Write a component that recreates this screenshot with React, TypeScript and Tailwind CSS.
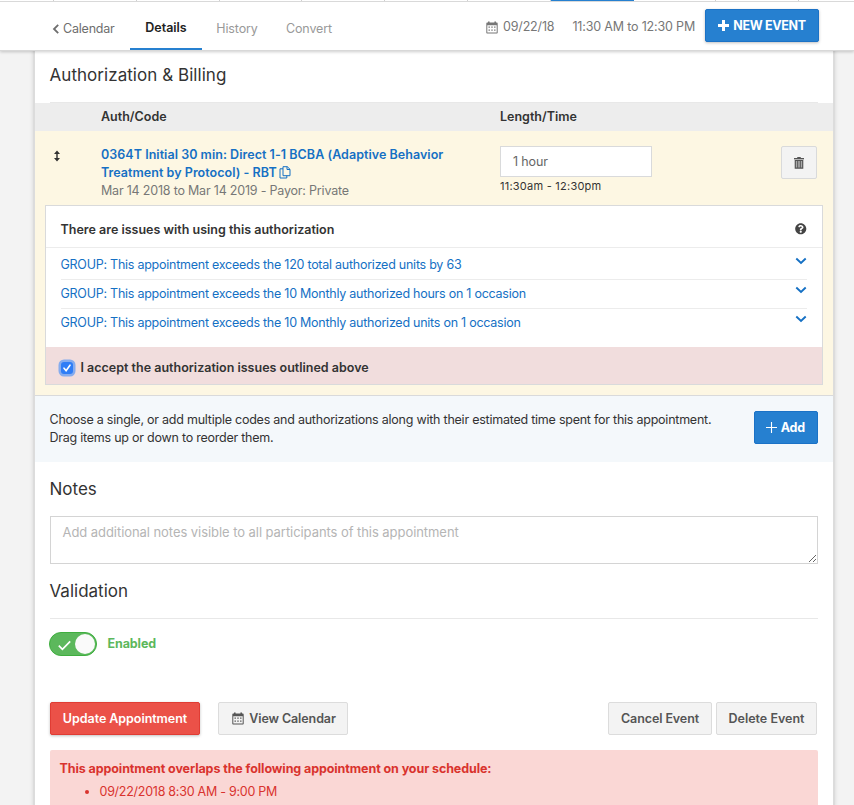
import { useState } from 'react';
import { FaQuestionCircle } from 'react-icons/fa';

const TABS = ['Details', 'History', 'Convert'];

const WEEK_STRIP = [0, 1, 2, 3, 4, 5, 6, 7, 8, 9];

const ISSUES = [
  'GROUP: This appointment exceeds the 120 total authorized units by 63',
  'GROUP: This appointment exceeds the 10 Monthly authorized hours on 1 occasion',
  'GROUP: This appointment exceeds the 10 Monthly authorized units on 1 occasion',
];

function CalendarIcon({ className }: { className?: string }) {
  return (
    <svg viewBox="0 0 12 13" className={className} fill="currentColor">
      <path fillRule="evenodd" d="M2 .5h1.6v1h4.8v-1H10v1h.6c.7 0 1.1.5 1.1 1.1v8.8c0 .7-.4 1.1-1.1 1.1H1.4c-.7 0-1.1-.4-1.1-1.1V2.600c0-.6.4-1.100 1.100-1.100H2zM1.300 4.300v7.200h9.400V4.300z" />
      <path d="M2.500 5.600h1.400v1.200H2.500zM5.300 5.600h1.400v1.200H5.300zM8.100 5.600h1.400v1.200H8.100zM2.500 8.600h1.400v1.200H2.500zM5.300 8.600h1.400v1.200H5.300zM8.100 8.600h1.400v1.200H8.100z" />
    </svg>
  );
}

function CopyIcon() {
  return (
    <svg viewBox="0 0 12 13" className="inline-block w-3 h-[13px] ml-0.5 -mt-[3px]" fill="none" stroke="currentColor" strokeWidth="1">
      <path d="M4 .7h4.300l2.700 2.600v6.400H4z" />
      <path d="M8 .7v2.800h3" />
      <path d="M4 2.800H1v9.200h6.800V9.700" />
    </svg>
  );
}

function TrashIcon() {
  return (
    <svg viewBox="0 0 10 12" className="w-2.5 h-3" fill="none" stroke="#555">
      <path d="M1.300 3.500h7.400v7.700H1.300z" fill="#aaa" strokeWidth="1.200" />
      <path d="M0 1.700h10" strokeWidth="1.400" />
      <path d="M3.500 1V.5h3V1" />
      <path d="M3.700 3.500v7.500M6.300 3.500v7.500" strokeWidth="1" />
    </svg>
  );
}

function Chevron() {
  return (
    <svg viewBox="0 0 12 8" className="w-3 h-2" fill="none" stroke="#1570c4" strokeWidth="1.900">
      <path d="M1.300 1.500 6 6l4.700-4.500" />
    </svg>
  );
}

function TopBar() {
  const [tab, setTab] = useState('Details');

  return (
    <header className="relative z-10 h-[51px] bg-white border-b border-[#d8d8d8] shadow-[0_1px_3px_rgba(0,0,0,0.2)]">
      {/* Bottom edge of the day strip */}
      <div className="flex h-0.5 border-b border-[#d9d9d9] overflow-hidden">
        <div className="w-[54px] shrink-0 h-px border-r border-[#d0d0d0]" />
        {WEEK_STRIP.map(day => (
          <div
            key={day}
            className={`shrink-0 w-[82.8px] ${day === 6 ? 'h-0.5 bg-[#2680d0]' : 'h-px border-r border-[#d0d0d0]'}`}
          />
        ))}
      </div>

      <div className="flex items-start h-12 pl-[52px] pr-[35px]">
        <button className="flex items-center h-[53px] w-[78px] text-[#6e6e6e] text-[12.5px] tracking-[-0.2px]">
          <svg viewBox="0 0 8 10" className="w-2 h-2.5 mr-[3px]" fill="none" stroke="currentColor" strokeWidth="1.800">
            <path d="M6.200.8 2 5l4.200 4.200" />
          </svg>
          Calendar
        </button>
        {TABS.map(name => (
          <button
            key={name}
            onClick={() => setTab(name)}
            className={`w-[72px] text-[12.5px] ${
              name === tab
                ? 'h-12 pt-[5px] font-semibold text-[#222] border-b-2 border-[#2680d0]'
                : 'h-[53px] pr-0.5 text-[#999] tracking-[-0.12px]'
            }`}
          >
            {name}
          </button>
        ))}
        <div className="flex ml-auto h-[50px] items-center text-[12.5px] text-[#777] tracking-[-0.17px]">
          <CalendarIcon className="w-3 h-[13px] mr-[5px]" />
          <span>09/22/18</span>
          <span className="ml-[18px]">11:30 AM to 12:30 PM</span>
        </div>
        <button className="flex items-center justify-center w-[114px] h-[33px] mt-[7px] ml-[10px] rounded-[2px] bg-[#2680d0] border border-[#1b72c6] text-white text-[12.5px] font-bold tracking-[-0.33px] shadow-[0_1px_3px_rgba(0,0,0,0.25)]">
          <svg viewBox="0 0 11 11" className="w-[11px] h-[11px] mr-1" stroke="currentColor" strokeWidth="3">
            <path d="M5.500 0v11M0 5.500h11" />
          </svg>
          NEW EVENT
        </button>
      </div>
    </header>
  );
}

function IssuesPanel() {
  const [accepted, setAccepted] = useState(true);

  return (
    <div className="mx-[10px] h-[180px] border border-[#d9dadb] bg-white">
      <div className="flex items-center justify-between h-[42px] pl-[14.500px] pr-[15.500px] pt-[5px] border-b border-[#ececec]">
        <h3 className="pt-px font-semibold text-[#333]">There are issues with using this authorization</h3>
        <FaQuestionCircle className="w-[11.500px] h-[11.500px] text-[#444]" />
      </div>
      <ul className="px-[15px] h-[99px]">
        {ISSUES.map((issue, i) => (
          <li
            key={issue}
            className={`flex justify-between text-[#1570c4] tracking-[-0.25px] ${i === 0 ? 'h-8 pt-2' : 'h-[29px] pt-[5px]'} ${
              i < 2 ? 'border-b border-[#ececec]' : ''
            }`}
          >
            <span className="-ml-[0.500px]">{issue}</span>
            <span className="pt-px"><Chevron /></span>
          </li>
        ))}
      </ul>
      <label className="flex items-center h-[37px] pl-[15px] pt-1 bg-[#f1dddd] font-semibold text-[#333]">
        <input type="checkbox" className="sr-only" checked={accepted} onChange={() => setAccepted(!accepted)} />
        <span className="flex items-center justify-center w-3 h-3 rounded-[3px] bg-[#2f7df6] ring-[2.5px] ring-[#86acee] mr-[7.500px]">
          {accepted && (
            <svg viewBox="0 0 10 10" className="w-2.5 h-2.5" fill="none" stroke="#fff" strokeWidth="1.600" strokeLinecap="round">
              <path d="M2 5.200 4.100 7.600 8 2.200" />
            </svg>
          )}
        </span>
        I accept the authorization issues outlined above
      </label>
    </div>
  );
}

export default function App() {
  const [enabled, setEnabled] = useState(true);

  return (
    <div className="h-[805px] overflow-hidden bg-[#f3f3f3] font-['Inter','Liberation_Sans',sans-serif] text-[12.5px] leading-[18px] text-[#333]">
      <TopBar />

      <main className="mx-[35px] w-[798px] h-[754px] bg-white shadow-[0_0_0_2px_#dcdcdc,0_0_4px_2px_rgba(0,0,0,0.12)]">
        {/* Authorization */}
        <section>
          <h2 className="h-[52px] mx-[15px] pt-[14px] border-b border-[#e8e8e8] text-[17px] leading-5 tracking-[0.05px] -indent-[0.500px]">Authorization &amp; Billing</h2>
          <div className="flex items-center h-7 bg-[#ededed] font-semibold">
            <span className="w-[465px] pl-[66px]">Auth/Code</span>
            <span>Length/Time</span>
          </div>

          <div className="h-[265px] bg-[#fdf7e3] border-b border-[#d9dadb]">
            <div className="flex h-[74px] pt-[15px] pr-4">
              <div className="w-[66px] pl-[18px] pt-1">
                <svg viewBox="0 0 8 12" className="w-2 h-3" fill="none" stroke="#444" strokeWidth="1.600">
                  <path d="M4 2v8" />
                  <path d="M1 4 4 .5 7 4zM1 8l3 3.500L7 8z" fill="#333" stroke="none" />
                </svg>
              </div>
              <div className="w-[399px]">
                <a href="#" className="block w-[370px] font-semibold text-[#1570c4] tracking-[0.04px]">
                  0364T Initial 30 min: Direct 1-1 BCBA (Adaptive Behavior
                  <br />
                  Treatment by Protocol) - RBT
                  <CopyIcon />
                </a>
                <p className="text-[#777] tracking-[-0.2px]">Mar 14 2018 to Mar 14 2019 - Payor: Private</p>
              </div>
              <div>
                <input
                  defaultValue="1 hour"
                  className="block w-[152px] h-[31px] px-3 border border-[#d9dadb] bg-white text-[#666] tracking-[-0.15px] outline-none"
                />
                <p className="text-[11px] tracking-[0.24px] text-[#333]">11:30am - 12:30pm</p>
              </div>
              <button className="flex items-center justify-center ml-auto w-9 h-[33px] rounded-[2px] border border-[#d9dadb] bg-[#f3f3f3]">
                <TrashIcon />
              </button>
            </div>
            <IssuesPanel />
          </div>

          <div className="flex justify-between h-[66px] pl-[14.500px] pr-[15px] pt-[15px] bg-[#f4f8fb]">
            <p className="tracking-[-0.235px]">
              Choose a single, or add multiple codes and authorizations along with their estimated time spent for this appointment.
              <br />
              Drag items up or down to reorder them.
            </p>
            <button className="flex shrink-0 items-center justify-center w-16 h-[33px] pr-px rounded-[2px] bg-[#2680d0] border border-[#1b72c6] text-white font-bold tracking-[-0.2px]">
              <svg viewBox="0 0 11 11" className="w-[11px] h-[11px] mr-[3.500px]" stroke="currentColor" strokeWidth="1.100">
                <path d="M5.500 0v11M0 5.500h11" />
              </svg>
              Add
            </button>
          </div>
        </section>

        {/* Notes */}
        <section className="px-[15px]">
          <h2 className="h-[54px] pt-[17px] text-[17px] leading-5 -indent-[0.500px]">Notes</h2>
          <textarea
            placeholder="Add additional notes visible to all participants of this appointment"
            className="block w-full h-12 px-[11.500px] pt-1.5 border border-[#d4d4d4] bg-white text-[13px] tracking-[-0.06px] placeholder:text-[#b5b5b5] resize outline-none"
          />
        </section>

        {/* Validation */}
        <section className="px-[15px]">
          <h2 className="h-[55px] pt-[17px] border-b border-[#e8e8e8] text-[17px] leading-5 -indent-[0.500px]">Validation</h2>
          <div className="flex items-center h-[50px] -ml-px">
            <button
              onClick={() => setEnabled(!enabled)}
              className={`flex items-center justify-between w-12 h-6 pl-2 pr-px rounded-full border ${
                enabled ? 'bg-[#5cb85c] border-[#3fae3f]' : 'bg-[#bbb] border-[#aaa] flex-row-reverse'
              }`}
            >
              <svg viewBox="0 0 13 11" className="w-[13px] h-[11px] mt-0.5" fill="none" stroke="#fff" strokeWidth="1.700">
                <path d="M.8 5.700 4.400 9.300 12.200 1.300" />
              </svg>
              <span className="w-5 h-5 rounded-full bg-[#fafafa]" />
            </button>
            <span className="ml-[10.500px] font-bold text-[#5cb85c] tracking-[-0.1px]">Enabled</span>
          </div>
        </section>

        {/* Actions */}
        <section className="px-[15px] pt-[33px]">
          <div className="flex h-12 pr-px">
            <button className="w-[150px] h-[33px] rounded-[2px] border border-[#e03c34] bg-[#eb5148] text-white font-semibold tracking-[-0.05px] shadow-[0_1px_3px_rgba(0,0,0,0.25)]">
              Update Appointment
            </button>
            <button className="flex items-center justify-center ml-[18px] w-[130px] h-[33px] rounded-[2px] border border-[#dcdcdc] bg-[#f3f3f3] text-[#555] font-semibold tracking-[-0.1px]">
              <CalendarIcon className="w-3 h-[13px] mr-[5px] ml-0.5" />
              View Calendar
            </button>
            <button className="ml-auto w-[104px] h-[33px] rounded-[2px] border border-[#dcdcdc] bg-[#f3f3f3] text-[#555] font-semibold tracking-[-0.1px]">
              Cancel Event
            </button>
            <button className="ml-1 w-[101px] h-[33px] rounded-[2px] border border-[#dcdcdc] bg-[#f3f3f3] text-[#555] font-semibold">
              Delete Event
            </button>
          </div>

          <div className="h-20 px-[9.500px] pt-[10px] rounded-[2px] bg-[#fad7d5] text-[#d9332e]">
            <p className="font-bold tracking-[-0.09px]">This appointment overlaps the following appointment on your schedule:</p>
            <ul className="list-disc pl-10 pt-[5px]">
              <li className="tracking-[-0.26px]">09/22/2018 8:30 AM - 9:00 PM</li>
            </ul>
          </div>
        </section>
      </main>
    </div>
  );
}
